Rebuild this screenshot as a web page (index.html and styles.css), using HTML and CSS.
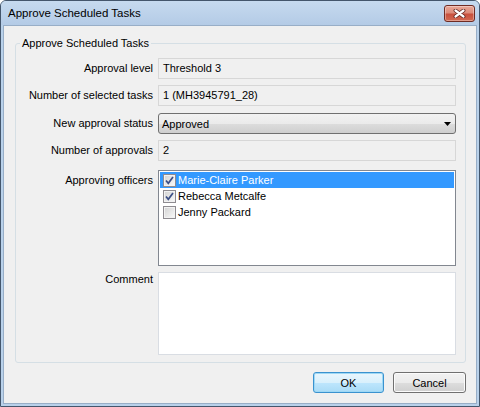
FILE: index.html
```html
<!DOCTYPE html>
<html lang="en">
<head>
  <meta charset="UTF-8" />
  <title>Approve Scheduled Tasks</title>
  <link rel="stylesheet" href="styles.css">
</head>
<body>
  <div class="window">
    <div class="titlebar">
      <span class="title">Approve Scheduled Tasks</span>
      <button class="close-btn" type="button" aria-label="Close">
        <svg width="13" height="9" viewBox="0 0 13 9">
          <path d="M2.5 1.5 L10.5 7.5 M10.5 1.5 L2.5 7.5" stroke="#5a1f18" stroke-width="3.8" stroke-linecap="round" fill="none"/>
          <path d="M2.5 1.5 L10.5 7.5 M10.5 1.5 L2.5 7.5" stroke="#fff" stroke-width="2.2" stroke-linecap="round" fill="none"/>
        </svg>
      </button>
    </div>

    <div class="client">
      <fieldset class="group">
        <legend>Approve Scheduled Tasks</legend>
        <div class="form-grid">
          <label class="form-label">Approval level</label>
          <div class="field">Threshold 3</div>

          <label class="form-label">Number of selected tasks</label>
          <div class="field">1 (MH3945791_28)</div>

          <label class="form-label combo-label">New approval status</label>
          <div class="combo">
            <span>Approved</span>
            <svg width="7" height="4" viewBox="0 0 7 4"><polygon points="0,0 7,0 3.5,4" fill="#000"/></svg>
          </div>

          <label class="form-label">Number of approvals</label>
          <div class="field">2</div>

          <label class="form-label list-label">Approving officers</label>
          <div class="listbox">
            <div class="list-item selected">
              <span class="check checked"><svg width="11" height="11" viewBox="0 0 11 11"><path d="M2 5.5 L4.3 8.3 L9 2" stroke="#3c4f86" stroke-width="1.7" fill="none"/></svg></span>
              Marie-Claire Parker
            </div>
            <div class="list-item">
              <span class="check checked"><svg width="11" height="11" viewBox="0 0 11 11"><path d="M2 5.5 L4.3 8.3 L9 2" stroke="#3c4f86" stroke-width="1.7" fill="none"/></svg></span>
              Rebecca Metcalfe
            </div>
            <div class="list-item">
              <span class="check"></span>
              Jenny Packard
            </div>
          </div>

          <label class="form-label comment-label">Comment</label>
          <textarea class="comment"></textarea>
        </div>
      </fieldset>

      <div class="buttons">
        <button class="btn btn-default" type="button">OK</button>
        <button class="btn btn-cancel" type="button">Cancel</button>
      </div>
    </div>
  </div>
</body>
</html>
```

FILE: styles.css
```css
body {
  margin: 0;
  background: #fff;
  font-family: "Liberation Sans", Arial, sans-serif;
  font-size: 11px;
  color: #000;
}
.window {
  width: 480px;
  height: 407px;
  box-sizing: border-box;
  border: 1px solid #44566c;
  border-radius: 6px 6px 0 0;
  background: #b9d1ea;
  display: flex;
  flex-direction: column;
}
.titlebar {
  height: 24px;
  flex: none;
  display: flex;
  align-items: center;
  justify-content: space-between;
  padding: 0 4px 0 7px;
  border-radius: 5px 5px 0 0;
  background: linear-gradient(#c6daef, #b4cbe6);
}
.title {
  font-size: 11.5px;
}
.close-btn {
  width: 31px;
  height: 17px;
  padding: 0;
  border: 1px solid #6f2b23;
  border-radius: 3px;
  display: flex;
  align-items: center;
  justify-content: center;
  background: linear-gradient(#e9a797 0%, #dc8c7a 45%, #c8503d 55%, #d26a52 100%);
  box-shadow: inset 0 0 0 1px rgba(255, 255, 255, 0.35);
}
.client {
  flex: 1;
  margin: 0 2px 2px;
  border: 1px solid #98aec7;
  background: #f0f0f0;
  display: flex;
  flex-direction: column;
}
.group {
  margin: 10px 10px 0 11px;
  padding: 8px 9px 7px 0;
  border: 1px solid #d5dfe5;
  border-radius: 3px;
  min-inline-size: 0;
}
.group legend {
  margin-left: 4px;
  padding: 0 2px;
  line-height: 14px;
  font-size: 11px;
}
.form-grid {
  display: grid;
  grid-template-columns: 137px 298px;
  column-gap: 5px;
  row-gap: 6px;
}
.form-label {
  text-align: right;
  line-height: 21px;
  white-space: nowrap;
}
.combo-label {
  margin-top: 1px;
}
.list-label {
  margin-top: 3px;
}
.comment-label {
  line-height: 15px;
}
.field {
  height: 21px;
  box-sizing: border-box;
  padding: 0 4px;
  line-height: 19px;
  border: 1px solid #d7d7d7;
  background: #f0f0f0;
}
.combo {
  height: 21px;
  margin-top: 1px;
  box-sizing: border-box;
  padding: 0 4px 0 3px;
  display: flex;
  align-items: center;
  justify-content: space-between;
  border: 1px solid #707070;
  border-radius: 3px;
  background: linear-gradient(#f2f2f2 0%, #ebebeb 50%, #dddddd 51%, #cfcfcf 100%);
}
.listbox {
  height: 96px;
  margin-top: 3px;
  box-sizing: border-box;
  padding: 1px;
  border: 1px solid #828790;
  background: #fff;
}
.list-item {
  height: 16px;
  display: flex;
  align-items: center;
  gap: 2px;
  padding-left: 3px;
}
.list-item.selected {
  background: #3399ff;
  color: #fff;
}
.check {
  width: 13px;
  height: 13px;
  box-sizing: border-box;
  flex: none;
  display: flex;
  align-items: center;
  justify-content: center;
  border: 1px solid #8e8b90;
  background: linear-gradient(135deg, #d2d2d2, #fafafa);
  box-shadow: inset 0 0 0 1px #f2f2f2;
}
.comment {
  display: block;
  width: 100%;
  height: 83px;
  box-sizing: border-box;
  margin: 0;
  border: 1px solid #d9dde3;
  background: #fff;
  resize: none;
  font: inherit;
}
.buttons {
  display: flex;
  justify-content: flex-end;
  gap: 9px;
  margin: 9px 10px 0 0;
}
.btn {
  height: 21px;
  padding: 0;
  border-radius: 3px;
  font: inherit;
  color: #000;
}
.btn-default {
  width: 71px;
  border: 1px solid #3a92cf;
  background: linear-gradient(#e9f6fd 0%, #d9f0fc 50%, #bee6fd 51%, #a9dbf6 100%);
  box-shadow: inset 0 0 0 1px #9ed8f5;
}
.btn-cancel {
  width: 73px;
  border: 1px solid #707070;
  background: linear-gradient(#f2f2f2 0%, #ebebeb 50%, #dddddd 51%, #cfcfcf 100%);
  box-shadow: inset 0 0 0 1px #fbfbfb;
}
```
